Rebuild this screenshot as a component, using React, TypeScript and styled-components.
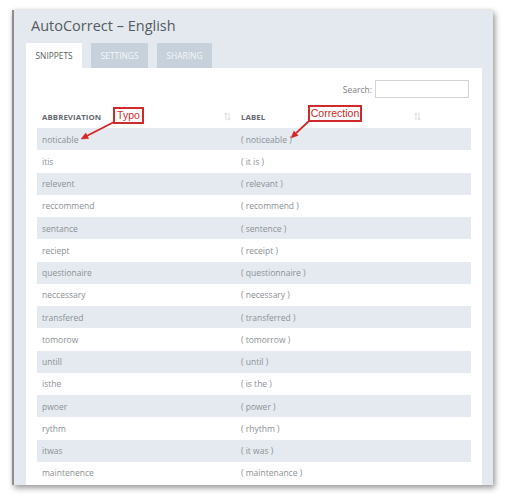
import React from 'react';
import styled, { createGlobalStyle } from 'styled-components';

const GlobalStyle = createGlobalStyle`
  html, body {
    margin: 0;
    padding: 0;
    background: #ffffff;
  }
  body {
    font-family: "Open Sans", "Liberation Sans", sans-serif;
  }
`;

const Page = styled.div`
  position: relative;
  width: 506px;
  height: 500px;
  padding: 10px 0 0 12px;
  box-sizing: border-box;
  overflow: hidden;
`;

const Window = styled.div`
  width: 481px;
  height: 475px;
  box-sizing: border-box;
  background: #e3e9ef;
  border-left: 2px solid #8e8e8e;
  box-shadow: 2px 3px 6px rgba(0, 0, 0, 0.4), 0 -1px 3px rgba(0, 0, 0, 0.08);
  padding: 6px 11px 0 12px;
  display: flex;
  flex-direction: column;
`;

const Title = styled.h1`
  margin: 0 0 7px 5px;
  font-size: 14.5px;
  line-height: 20px;
  font-weight: 400;
  color: #555b61;
`;

const Tabs = styled.div`
  display: flex;
  gap: 9px;
`;

const Tab = styled.div<{ $active?: boolean }>`
  height: 25px;
  padding: 0 9.5px;
  display: flex;
  align-items: center;
  font-size: 8.4px;
  text-transform: uppercase;
  color: ${(p) => (p.$active ? '#5a5f66' : '#f4f7fa')};
  background: ${(p) => (p.$active ? '#ffffff' : '#c6d1db')};
`;

const Content = styled.div`
  flex: 1;
  background: #ffffff;
  padding: 12px 11px 0;
  overflow: hidden;
`;

const SearchRow = styled.div`
  display: flex;
  justify-content: flex-end;
  align-items: center;
  gap: 3px;
  margin-right: 2px;
  font-size: 8.5px;
  color: #7d8287;
`;

const SearchInput = styled.input`
  width: 94px;
  height: 18px;
  box-sizing: border-box;
  border: 1px solid #cfd4d9;
  padding: 0 4px;
  outline: none;
`;

const Table = styled.div`
  margin-top: 7px;
`;

const HeadRow = styled.div`
  display: grid;
  grid-template-columns: 199px 190px 1fr;
  height: 23px;
  align-items: center;
`;

const HeadCell = styled.div`
  display: flex;
  align-items: center;
  justify-content: space-between;
  padding: 0 5px 0 5px;
  font-size: 7.8px;
  font-weight: 700;
  letter-spacing: 0.1px;
  color: #64696f;
  text-transform: uppercase;
`;

const Row = styled.div<{ $striped: boolean }>`
  display: grid;
  grid-template-columns: 199px 190px 1fr;
  height: 22.25px;
  align-items: center;
  background: ${(p) => (p.$striped ? '#e5eaf0' : '#ffffff')};
`;

const Cell = styled.div`
  padding-left: 5px;
  font-size: 8.5px;
  color: #8c9196;
  white-space: nowrap;
`;

const Callout = styled.div<{ $left: number; $top: number; $width: number }>`
  position: absolute;
  left: ${(p) => p.$left}px;
  top: ${(p) => p.$top}px;
  width: ${(p) => p.$width}px;
  height: 17px;
  box-sizing: border-box;
  border: 2px solid #d02a2a;
  background: #ffffff;
  color: #d02a2a;
  font-family: "Liberation Sans", Arial, sans-serif;
  font-size: 10.5px;
  line-height: 13px;
  text-align: center;
`;

const Overlay = styled.svg`
  position: absolute;
  left: 0;
  top: 0;
  pointer-events: none;
`;

const SortIcon = () => (
  <svg width="7" height="9" viewBox="0 0 7 9">
    <g stroke="#d3d7dc" strokeWidth="0.9" fill="none">
      <path d="M2 8.5V1M0.6 2.4L2 1l1.4 1.4" />
      <path d="M5 0.5V8M3.6 6.6L5 8l1.4-1.4" />
    </g>
  </svg>
);

const rows: [string, string][] = [
  ['noticable', 'noticeable'],
  ['itis', 'it is'],
  ['relevent', 'relevant'],
  ['reccommend', 'recommend'],
  ['sentance', 'sentence'],
  ['reciept', 'receipt'],
  ['questionaire', 'questionnaire'],
  ['neccessary', 'necessary'],
  ['transfered', 'transferred'],
  ['tomorow', 'tomorrow'],
  ['untill', 'until'],
  ['isthe', 'is the'],
  ['pwoer', 'power'],
  ['rythm', 'rhythm'],
  ['itwas', 'it was'],
  ['maintenence', 'maintenance'],
];

export default function App() {
  return (
    <Page>
      <GlobalStyle />
      <Window>
        <Title>AutoCorrect – English</Title>
        <Tabs>
          <Tab $active>Snippets</Tab>
          <Tab>Settings</Tab>
          <Tab>Sharing</Tab>
        </Tabs>
        <Content>
          <SearchRow>
            <span>Search:</span>
            <SearchInput type="text" />
          </SearchRow>
          <Table>
            <HeadRow>
              <HeadCell>
                Abbreviation
                <SortIcon />
              </HeadCell>
              <HeadCell>
                Label
                <SortIcon />
              </HeadCell>
              <HeadCell />
            </HeadRow>
            {rows.map(([abbr, label], i) => (
              <Row key={abbr} $striped={i % 2 === 0}>
                <Cell>{abbr}</Cell>
                <Cell>( {label} )</Cell>
                <Cell />
              </Row>
            ))}
          </Table>
        </Content>
      </Window>

      <Callout $left={113} $top={107} $width={31}>Typo</Callout>
      <Callout $left={308} $top={105} $width={54}>Correction</Callout>
      <Overlay width="506" height="500">
        <g stroke="#d42424" strokeWidth="1.8" fill="#d42424">
          <line x1="114" y1="122" x2="87.2" y2="135.8" />
          <polygon points="81,139 88.6,138.5 85.8,133.1" strokeWidth="0.5" />
          <line x1="309" y1="121" x2="296.1" y2="133.2" />
          <polygon points="291,138 298.1,135.4 294,131" strokeWidth="0.5" />
        </g>
      </Overlay>
    </Page>
  );
}
